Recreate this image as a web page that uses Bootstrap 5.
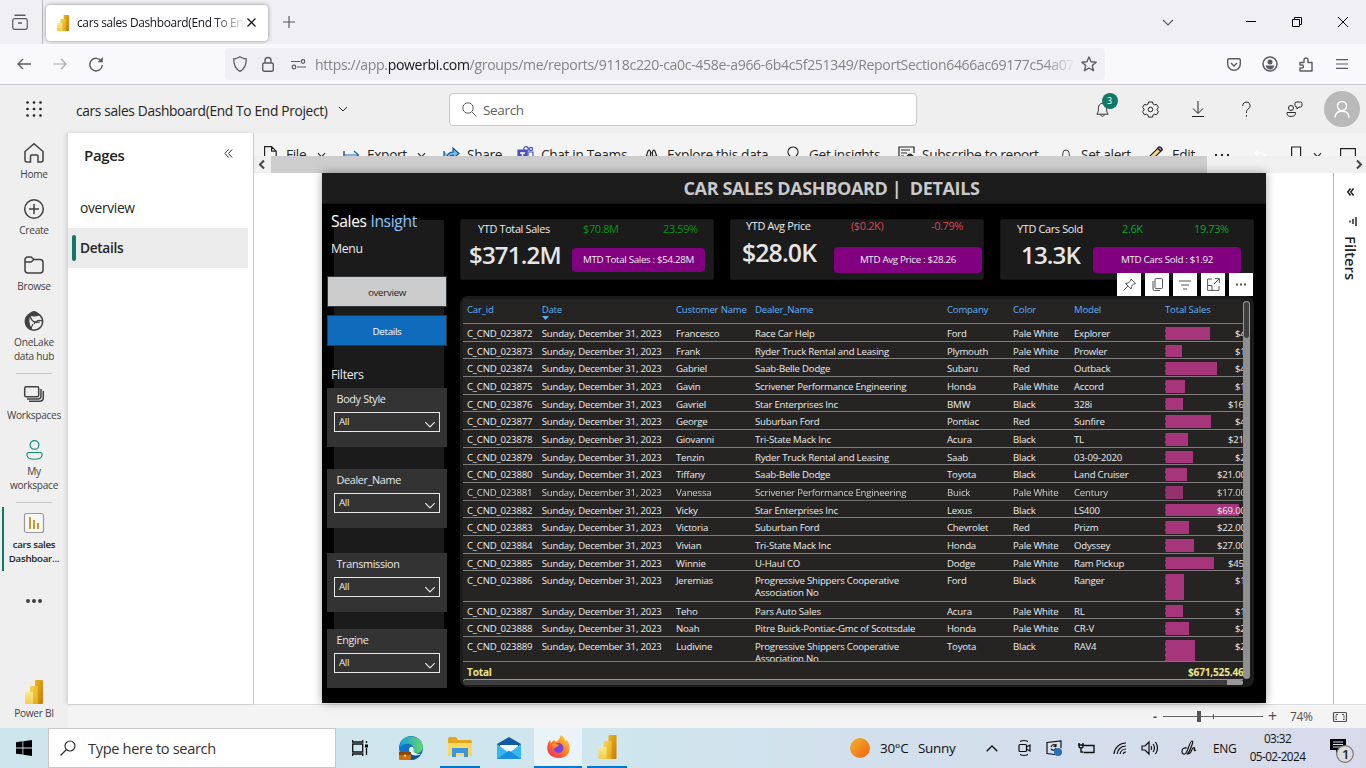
<!DOCTYPE html>
<html lang="en">
<head>
<meta charset="utf-8">
<title>cars sales Dashboard(End To End Project)</title>
<link href="https://cdn.jsdelivr.net/npm/bootstrap@5.3.0/dist/css/bootstrap.min.css" rel="stylesheet">
<style>
body{width:1366px;height:768px;overflow:hidden;font-family:"Open Sans","Noto Sans",sans-serif;font-size:13.5px;letter-spacing:-.025em;color:#252423;line-height:1.3;background:#fff}
svg{display:block;fill:none;stroke:currentColor;stroke-width:1.2;overflow:visible;flex:none}
.tracks{display:grid;align-items:center;white-space:nowrap}
.ctr{justify-self:center}
.thin svg{stroke-width:1}
/* browser */
.tabstrip{height:44px;background:#f0eff4;color:#5b5b66;grid-template-columns:42px 1px 3px 222px 42px 839px 38px 41px 46px 46px 46px}
.tabstrip>.vline{background:#b9b9bf;height:44px}
.apptab{height:36px;background:#fff;border-radius:4px;box-shadow:0 0 4px rgba(0,0,0,.4);margin-top:1px;color:#15141a;grid-template-columns:10px 21px 170px 20px;font-size:11.9px}
.fadeout{overflow:hidden;-webkit-mask-image:linear-gradient(90deg,#000 80%,transparent)}
.fadeurl{-webkit-mask-image:linear-gradient(90deg,#000 96%,transparent);padding-top:2px}
.toolbar{height:41px;background:#f9f9fb;border-bottom:1px solid #ccccd0;color:#5b5b66;grid-template-columns:6px 36px 36px 36px 111px 880px 111px 36px 36px 36px 36px}
.urlbar{height:32px;background:#f0f0f4;border-radius:4px;grid-template-columns:30px 26px 34px 760px 30px;font-size:14.07px;color:#83838a}
.urlbar b{font-weight:400;color:#15141a}
/* service header */
.svc{height:48px;background:#efefef;grid-template-columns:76px 262px 111px 468px 161px 48px 48px 48px 48px 48px 48px;font-size:13.75px}
.svc>span,.searchbox>span{padding-top:3px}
.searchbox{height:33px;background:#fff;border:1px solid #c8c8c8;border-radius:4px;color:#616161;grid-template-columns:12px 21px auto;font-size:13.5px}
.bubble{left:7px;top:-8px;width:16px;height:16px;background:#117865;color:#fff;font-size:9px;line-height:16px}
.avatar{width:36px;height:36px;background:#b9b9b9;color:#fff;padding:9px}
/* side nav */
.rail{width:68px;height:595px;background:#efefef;color:#424242;font-size:10.1px;line-height:14px;letter-spacing:-.025em;text-align:center}
.rail .ico{height:24px;margin-bottom:2px;display:flex;align-items:center;justify-content:center}
.railitem{height:56px}
.railline{width:36px;height:1px;background:#c7c7c7;margin:0 auto}
.sel{border-left:2px solid #117865;margin-left:2px;width:66px;height:64px;padding:4px 4px 0 0;font-weight:600;color:#242424;font-size:9.7px}
.sel .ico{margin-bottom:3px}
.pages{width:186px;height:571px;background:#fff;border-right:1px solid #c8c8c8;box-shadow:-2px 0 4px rgba(0,0,0,.13);z-index:1}
.pageon{height:40px;width:180px;background:#ebebeb;font-weight:600;font-size:13.7px}
.pageon i{width:4px;height:26px;border-radius:2px;background:#117865;margin:0 4px}
/* ribbon */
.ribbonclip{height:23px;background:#f4f4f4;overflow:hidden}
.ribbon{height:43px;font-size:13.7px;grid-template-columns:10px 22px 31px 26px 24px 50px 26px 24px 50px 24px 104px 22px 120px 22px 89px 24px 138px 21px 69px 22px 42px 40px 37px 22px 27px 20px}
.hscroll{height:17px;background:#f0f0f0;color:#444}
.hscroll .thumb{width:936px;height:17px;background:#cdcdcd}
.filterpane{width:33px;border-left:1px solid #b5b5b5;background:#fff}
.vert{writing-mode:vertical-rl;font-weight:600;font-size:14.8px;line-height:16px;letter-spacing:0}
/* report */
.canvas{width:944px;height:530px;background:#000;color:#ececec;margin-left:68px;box-shadow:0 0 9px rgba(0,0,0,.35)}
.titlebar{height:31px;background:#1c1c1c;border-bottom:1px solid #141414;color:#c9c9c9;font-weight:700;font-size:18px;letter-spacing:-.021em;text-align:center;padding:4px 0 0 75px;white-space:pre}
.side{width:120px;margin-left:5px;background:linear-gradient(#1b1b1b,#1b1b1b) 7px 16px/110px 100% no-repeat;height:484px}
.navbtn{height:31px;border:1px solid #33383d;font-size:9.8px;width:120px;padding-top:3px}
.slicer{height:59px;background:#333;font-size:10.8px;padding:4px 7px 0;letter-spacing:-.03em}
.slicer>span{display:block;height:14px;padding-left:2.500px;line-height:13px}
.dropbox{height:20px;border:1px solid #e8e8e8;margin-top:6px;padding:1px 3px 0 4px;font-size:9.8px}
.dropbox svg{margin-top:3px}
.kpi{width:254px;height:61px;background:#1b1b1b;border:1px solid #141414;border-radius:2px;line-height:14px;font-size:10.9px}
.kpi .big{font-size:24.1px;font-weight:600;letter-spacing:-.035em;line-height:30px;align-self:start;margin-top:-.5px;color:#e6e6e6}
.k2 .big{margin-top:-1.500px!important;font-size:24.8px!important}
.pill{background:#800080;border-radius:4px;text-align:center;font-size:9.8px}
.k1 .r1{grid-template-columns:17px 105px 80px 40px;margin-top:2px}.k1 .r2{grid-template-columns:8px 103px 133px}
.k2 .r1{grid-template-columns:15px 105px 80px 40px;margin-top:-1px}.k2 .r2{grid-template-columns:11px 92px 148px}
.k3 .r1{grid-template-columns:16px 105px 72px 40px;margin-top:2px}.k3 .r2{grid-template-columns:20px 72px 148px}
.up{color:#0a9414}.up3{color:#06a82a}.down{color:#d64550}
.visual{width:794px;height:391px;background:#1b1b1b;border-radius:8px;padding:3px}
.gridbody{width:780px;height:380px;background:#252423;overflow:hidden;font-size:9.6px;letter-spacing:-.02em}
.gr{display:grid;grid-template-columns:4px 74.700px 134.300px 79px 192px 66px 61px 91px 78px;line-height:12px;white-space:nowrap}
.gr.body{height:17.67px;border-bottom:1px solid #7e7e7e}
.gr.body.tall{height:30.33px}
.gr.body>div{padding-top:4px}
.gr.body>div.meter{padding-top:3px}
.gr.hd{height:25px;border-bottom:1px solid #2a8af5;color:#62aef7;padding-top:5px}
.gr.tot{height:19px;border-top:1px solid #2a8af5;color:#f0e58c;font-weight:700;padding-top:4px;background:#252423;font-size:10.1px}
.bar{height:calc(100% - 1px);background:#a7357c;border-left:1px dashed #6c2550}
.amt{padding-top:4px}
.v4{padding-left:70px}.v6{padding-left:63px}.v8{padding-left:52px}
.rows{height:337px;overflow:hidden}
.dim{opacity:.85}
.vsb{width:7px;height:378px;background:#8f8f8f;border-radius:4px;margin-top:2px}
.vsb i{display:block;width:7px;height:38px;background:#3f3f3f;border:1px solid #999;border-radius:4px}
.hsb{width:780px;height:6px;background:#3c3c3c;border-top:1px solid #999;border-radius:4px 0 0 4px}
.hsb i{display:block;width:16px;height:5px;background:#999;margin-left:auto;border-radius:0 4px 4px 0}
.hover{right:1px;top:-23px;gap:4px}
.hover span{width:24px;height:23px;background:#fff;color:#555;display:grid;place-items:center}
/* status and taskbar */
.status{height:24px;background:#f4f4f4;border-top:1px solid #dcdcdc;color:#505050;grid-template-columns:1085px 10px 100px 19px 51px 14px;font-size:12px}
.zoomline{height:1px;background:#666}
.zoomline i{left:34px;top:-5px;width:4px;height:11px;background:#555}
.zoomline b{left:50px;top:-2px;width:1px;height:5px;background:#555}
.taskbar{height:40px;background:linear-gradient(90deg,#cde5ec,#cfe6ee 45%,#d2dfec 65%,#d8daea);color:#111;grid-template-columns:48px 288px 48px 53px 46px 51px 48px 53px 245px 32px 38px 49px 36px 31px 33px 32px 31px 35px 32px 27px 76px 43px}
.taskbar>span,.find>span{padding-top:1px}
.taskbar .find{height:40px;background:#fff;border:1px solid #c4c8ca;grid-template-columns:11px 28px auto;font-size:14.6px;color:#333}
.under{height:40px;border-bottom:2px solid #0077d4}
.s12{font-size:12px}
.clock{line-height:18px;font-size:11.800px;letter-spacing:-.05em;margin:-2px 0 0 -33px}
</style>
</head>
<body>
<svg width="0" height="0" class="position-absolute">
<defs>
<linearGradient id="ga" x2="1" y2="1"><stop stop-color="#edb51b"/><stop offset="1" stop-color="#c37a0c"/></linearGradient>
<linearGradient id="gb" x2="1" y2="1"><stop stop-color="#f7d74f"/><stop offset="1" stop-color="#e3a813"/></linearGradient>
<linearGradient id="gc" x2="0" y2="1"><stop stop-color="#fbe98c"/><stop offset="1" stop-color="#f1ce4d"/></linearGradient>
<linearGradient id="sun" x2="1" y2="1"><stop stop-color="#f1b62c"/><stop offset="1" stop-color="#ee6110"/></linearGradient>
<linearGradient id="edg" x2="1"><stop stop-color="#1b9de2"/><stop offset="1" stop-color="#62d968"/></linearGradient>
<linearGradient id="ff" x1="1" x2="0" y2="1"><stop stop-color="#ffe23a"/><stop offset=".5" stop-color="#ff7a2a"/><stop offset="1" stop-color="#ee2263"/></linearGradient>
<symbol id="pbi" viewBox="0 0 18 24"><g stroke="none"><rect x="10" width="8" height="24" rx="1" fill="url(#ga)"/><path d="M5 7q0-1 1-1h6q1 0 1 1v17H5z" fill="url(#gb)"/><path d="M0 13q0-1 1-1h6q1 0 1 1v11H1q-1 0-1-1z" fill="url(#gc)"/></g></symbol>
<symbol id="chev" viewBox="0 0 10 6"><path d="M1 1l4 4 4-4"/></symbol>
<symbol id="bell" viewBox="0 0 16 18"><path d="M2 14h12c-1.500-2-1.700-4-1.700-7A4.300 4.600 0 0 0 3.700 7c0 3-.2 5-1.700 7zM6 14.500c.3 2.200 3.700 2.200 4 0"/></symbol>
<symbol id="dbl" viewBox="0 0 10 10"><path d="M5 .5L1 5l4 4.500M9 .5L5 5l4 4.500"/></symbol>
</defs></svg>

<div class="d-flex flex-column vh-100">
<header class="tracks tabstrip">
  <svg class="ctr" style="translate:-1px" width="16" height="16"><rect x=".7" y="4.700" width="14.600" height="10.600" rx="2"/><path d="M2.500 1.200h11M6 9h4" stroke-width="1.500"/></svg>
  <span class="vline"></span><span></span>
  <div class="tracks apptab"><span></span><svg width="14" height="16"><use href="#pbi"/></svg><span class="fadeout">cars sales Dashboard(End To End</span><svg width="9" height="9"><path d="M.5.5l8 8M8.500.5l-8 8"/></svg></div>
  <svg class="ctr" width="12" height="12"><path d="M6 0v12M0 6h12"/></svg><span></span>
  <svg class="ctr" width="12" height="7"><path d="M1 1l5 5 5-5"/></svg><span></span>
  <svg class="ctr text-black" width="10" height="2"><path d="M0 .5h10" stroke-width="1"/></svg>
  <svg class="ctr text-black" width="10" height="10"><path d="M.5 2.500h7v7h-7zM2.500 2.500v-2h7v7h-2" stroke-width="1"/></svg>
  <svg class="ctr text-black" width="10" height="10"><path d="M0 0l10 10M10 0L0 10" stroke-width="1"/></svg>
</header>

<div class="tracks toolbar"><span></span>
  <svg class="ctr" width="14" height="12"><path d="M14 6H1M6 1L1 6l5 5" stroke-width="1.400"/></svg>
  <svg class="ctr opacity-50" width="14" height="12"><path d="M0 6h13M8 1l5 5-5 5"/></svg>
  <svg class="ctr" width="14" height="14"><path d="M12.500 4.500A6.300 6.300 0 1 0 13.300 8" stroke-width="1.400"/><path d="M13.800 0v5.300H8.500z" fill="#5b5b66" stroke="none"/></svg><span></span>
  <div class="tracks urlbar">
    <svg class="ctr" width="14" height="16"><path d="M7 .7c2 1.400 4 2 6.300 2.300C13.300 9 12 13 7 15.300 2 13 .7 9 .7 3 3 2.700 5 2.100 7 .7z" stroke="#5b5b66" stroke-width="1.300"/></svg>
    <svg class="ctr" width="12" height="16"><rect x=".7" y="7" width="10.600" height="8.300" rx="1.500" stroke="#5b5b66" stroke-width="1.400"/><path d="M3 7V4.500a3 3 0 0 1 6 0V7" stroke="#5b5b66" stroke-width="1.400"/></svg>
    <svg class="ctr" width="15" height="10"><g stroke="#5b5b66"><path d="M0 2.500h9M6 8h9"/><circle cx="12" cy="2.500" r="1.800"/><circle cx="3" cy="8" r="1.800"/></g></svg>
    <span class="fadeout fadeurl">https://app.<b>powerbi.com</b>/groups/me/reports/9118c220-ca0c-458e-a966-6b4c5f251349/ReportSection6466ac69177c54a07</span>
    <svg class="ctr" style="translate:-1px" width="16" height="16"><path d="M8 1l2.100 4.700 5 .5-3.800 3.400 1.200 5L8 12l-4.500 2.600 1.200-5L.9 6.200l5-.5z" stroke="#5b5b66" stroke-width="1.400" stroke-linejoin="round"/></svg>
  </div><span></span>
  <svg class="ctr" width="14" height="13"><path d="M2 .7h10q1.300 0 1.300 1.300v4a6.300 6.300 0 0 1-12.600 0V2Q.7.700 2 .7zM4 5l3 3 3-3" stroke-width="1.400"/></svg>
  <svg class="ctr" width="16" height="16"><circle cx="8" cy="8" r="7" stroke-width="1.500"/><circle cx="8" cy="6" r="2.500" fill="#5b5b66" stroke="none"/><path d="M3.500 9.500h9q-1.500 4-4.500 4t-4.500-4z" fill="#5b5b66" stroke="none"/></svg>
  <svg class="ctr" width="14" height="15"><path d="M1 5.500h4V3a2 2 0 0 1 4 0v2.500h4V14H1v-3h2a1.500 1.500 0 0 0 0-3H1z" stroke-width="1.400" stroke-linejoin="round"/></svg>
  <svg class="ctr" width="12" height="10"><path d="M0 .7h12M0 5h12M0 9.300h12"/></svg>
</div>

<div class="tracks svc thin">
  <svg class="ms-auto me-auto" width="16" height="16" style="translate:-4px"><path d="M1.500 1.500h.01M8 1.500h.01M14.500 1.500h.01M1.500 8h.01M8 8h.01M14.500 8h.01M1.500 14.500h.01M8 14.500h.01M14.500 14.500h.01" stroke-width="2.700" stroke-linecap="round"/></svg>
  <span>cars sales Dashboard(End To End Project)</span><svg width="10" height="6"><use href="#chev"/></svg>
  <div class="tracks searchbox"><span></span><svg width="15" height="15"><circle cx="6" cy="6" r="5.200"/><path d="M10 10l4.500 4.500"/></svg><span>Search</span></div><span></span>
  <div class="ctr position-relative"><svg width="15" height="17"><use href="#bell"/></svg><span class="bubble position-absolute rounded-circle text-center">3</span></div>
  <svg class="ctr" width="17" height="17"><circle cx="8.500" cy="8.500" r="2.300"/><path d="M6.500 1h4l.5 2 1.500.9 2-.6 2 3.200-1.500 1.400v1.300l1.500 1.400-2 3.200-2-.6-1.500.9-.5 2h-4l-.5-2-1.500-.9-2 .6-2-3.200L2 9.200V7.900L.5 6.500l2-3.200 2 .6L6 3z" stroke-linejoin="round"/></svg>
  <svg class="ctr" width="12" height="16"><path d="M6 0v12M1 7.500L6 12.500l5-5M0 15.500h12"/></svg>
  <svg class="ctr" width="9" height="15"><path d="M.7 4a3.700 3.700 0 1 1 5.800 2.800C5 8 4.400 8.600 4.400 11M4.400 13v1.700"/></svg>
  <svg class="ctr" width="17" height="17"><circle cx="5" cy="7" r="2.500"/><path d="M1 11.500h8.500v1c0 4-8.500 4-8.500 0zM9 2.500q0-1.500 1.500-1.500h4Q16 1 16 2.500v2Q16 6 14.500 6H13l-2 2V6q-2 0-2-1.500z"/></svg>
  <div class="ctr avatar rounded-circle"><svg width="18" height="18"><circle cx="9" cy="6" r="4.500" stroke-width="1.600"/><path d="M2 17.500C2 9 16 9 16 17.500" stroke-width="1.600"/></svg></div>
</div>

<div class="d-flex" style="height:595px">
  <nav class="rail flex-shrink-0 d-flex flex-column pt-2">
    <div class="railitem"><div class="ico"><svg width="20" height="20"><path d="M1 8.500L10 .8l9 7.700V17q0 2-2 2h-3v-6q0-1-1-1H7.500q-1 0-1 1v6H3q-2 0-2-2z" stroke-width="1.500"/></svg></div>Home</div>
    <div class="railitem"><div class="ico"><svg width="20" height="20"><circle cx="10" cy="10" r="9.300" stroke-width="1.500"/><path d="M10 5v10M5 10h10" stroke-width="1.500"/></svg></div>Create</div>
    <div class="railitem"><div class="ico"><svg width="20" height="18"><path d="M1 4q0-3 3-3h3l3 2.500h6q3 0 3 3V14q0 3-3 3H4q-3 0-3-3zM1 6h6l3-2.500" stroke-width="1.500"/></svg></div>Browse</div>
    <div class="railitem mb-2"><div class="ico"><svg width="20" height="20"><circle cx="10" cy="10.500" r="8.700" stroke-width="1.500"/><path d="M5 4Q10-3 15 4 10 6 5 4zM1.500 9Q2 5 6 4q-3 6 1 14Q1 15 1.500 9z" fill="#424242"/><path d="M6 5q2 8 10 6M9 13q-2 3-2 6M10 13q3-5 9-3"/></svg></div>OneLake<br>data hub</div>
    <div class="railline mb-2"></div>
    <div class="railitem"><div class="ico"><svg width="20" height="16"><rect x=".7" y=".7" width="14" height="10" rx="1.500" stroke-width="1.500"/><path d="M17 3v7q0 3-3 3H3M19.300 5v6.500q0 3.800-4 3.800H5" stroke-width="1.500"/></svg></div>Workspaces</div>
    <div class="railitem mb-2"><div class="ico" style="color:#148a78"><svg width="17" height="20"><circle cx="8.500" cy="5" r="4.400"/><path d="M3 12.500h11q2.500 0 2 3c-1 5-14 5-15 0q-.5-3 2-3z"/></svg></div>My<br>workspace</div>
    <div class="railline"></div>
    <div class="sel mt-1"><div class="ico"><svg width="20" height="20"><rect x=".5" y=".5" width="19" height="19" rx="2" fill="#f8f8f8" stroke="#999"/><path d="M6 4v12M10 7v9M14 10v6" stroke="#c98a1b" stroke-width="1.800"/></svg></div>cars sales<br>Dashboar...</div>
    <svg class="mx-auto mt-4" width="16" height="12"><path d="M2 6h.01M8 6h.01M14 6h.01" stroke-width="4" stroke-linecap="round"/></svg>
    <div class="mt-auto mb-1 pb-1"><div class="ico"><svg width="18" height="24"><use href="#pbi"/></svg></div>Power BI</div>
  </nav>
  <div>
  <div class="d-flex">
  <aside class="pages flex-shrink-0 thin">
    <div class="d-flex justify-content-between ps-3" style="height:66px;padding:13px 20px 0"><span class="fw-semibold" style="font-size:15px">Pages</span><svg style="margin-top:2px" width="9" height="11"><use href="#dbl"/></svg></div>
    <div style="padding-left:12px;height:29px;font-size:13.8px">overview</div>
    <div class="pageon d-flex align-items-center"><i></i>Details</div>
  </aside>
  <main style="width:1112px">
    <div class="ribbonclip"><div class="tracks ribbon"><span></span>
      <svg width="13" height="17"><path d="M.6.6h7l4.600 4.600v11H.6zM7.600.6v4.600h4.600"/></svg><span>File</span><svg width="9" height="6"><use href="#chev"/></svg>
      <svg width="16" height="10"><path d="M1 1v9"/><path d="M1 5h14M11 1l4.500 4-4.500 4" stroke="#0f6cbd"/></svg><span>Export</span><svg width="9" height="6"><use href="#chev"/></svg>
      <svg width="17" height="16"><path d="M1 4v11h11M4 12q0-7 6-7V1l6 5.500-6 5V8q-3 0-6 4z" fill="#7bb8ea" stroke="#0b5394"/></svg><span>Share</span>
      <svg width="17" height="17"><g stroke="#4b53bc"><circle cx="9" cy="3" r="2.300"/><circle cx="14" cy="3" r="1.600"/><path d="M11 6h5v9h-5z"/><path d="M1 4h9v10H1z" fill="#4b53bc"/></g><path d="M3 7h5M5.500 7v6" stroke="#fff" stroke-width="1.500"/></svg><span>Chat in Teams</span>
      <svg width="13" height="12"><path d="M1 8l2-6q2-2 2.500 1v6M12 8l-2-6Q8 0 7.500 3v6M5.500 4h2"/><circle cx="3" cy="9" r="2"/><circle cx="10" cy="9" r="2"/></svg><span>Explore this data</span>
      <svg width="12" height="18"><path d="M4 13Q4 11 2 9a5 5 0 1 1 8 0Q8 11 8 13zM4.500 16h3"/></svg><span>Get insights</span>
      <svg width="17" height="17"><path d="M6 14H1V1h15v6M3 4h9M3 7h6M3 10h3"/><path d="M7 15q2-2 2-5 3-4 6 0 0 3 2 5z" fill="#333"/></svg><span>Subscribe to report</span>
      <svg width="12" height="16"><use href="#bell"/></svg><span>Set alert</span>
      <svg width="16" height="16" style="translate:-3px -1px"><path d="M1 15l1-4L12 1q3 0 3 3L5 14z" fill="#f7d77f"/><path d="M12 1q3 0 3 3l-1.500 1.200-3-3z" fill="#b37ac4"/></svg><span>Edit</span>
      <svg width="16" height="4"><path d="M1 2h2M7 2h2M13 2h2" stroke-width="2"/></svg>
      <svg width="13" height="12" style="color:#fff"><path d="M4 1L1 4l3 3M1 4h7q4 1 3 6"/></svg>
      <svg width="11" height="18"><path d="M.6 1h9v16L5 13 .6 17z"/></svg><svg width="9" height="6"><use href="#chev"/></svg>
      <svg width="16" height="14"><path d="M.6.6h14.800v12H.6z"/></svg>
    </div></div>
    <div class="hscroll d-flex align-items-center justify-content-between"><svg width="17" height="9"><path d="M10 .5l-4 4 4 4" stroke-width="2"/></svg><div class="thumb"></div><svg class="ms-auto me-1" width="6" height="9"><path d="M1 .5l4 4-4 4" stroke-width="2"/></svg></div>
    <div class="d-flex" style="height:531px">
      <div class="flex-grow-1">
      <section class="canvas">
        <div class="titlebar">CAR SALES DASHBOARD |  DETAILS</div>
        <div class="d-flex">
          <div class="side flex-shrink-0 thin">
            <div style="padding:7px 0 0 4px;font-size:15.6px;height:37px;color:#fff">Sales <span style="color:#8cc4ff">Insight</span></div>
            <div class="ps-1" style="font-size:12.3px;height:35px">Menu</div>
            <div class="navbtn d-flex align-items-center justify-content-center" style="background:#ccc;color:#252423">overview</div>
            <div class="navbtn d-flex align-items-center justify-content-center mt-2 text-white" style="background:#0f6cbd">Details</div>
            <div class="ps-1" style="font-size:12.4px;height:42px;padding-top:21px">Filters</div>
            <div class="slicer"><span>Body Style</span><div class="dropbox d-flex align-items-center justify-content-between">All<svg width="12" height="7"><use href="#chev"/></svg></div></div>
            <div class="slicer" style="margin-top:22px"><span>Dealer_Name</span><div class="dropbox d-flex align-items-center justify-content-between">All<svg width="12" height="7"><use href="#chev"/></svg></div></div>
            <div class="slicer" style="margin-top:25px"><span>Transmission</span><div class="dropbox d-flex align-items-center justify-content-between">All<svg width="12" height="7"><use href="#chev"/></svg></div></div>
            <div class="slicer" style="margin-top:17px"><span>Engine</span><div class="dropbox d-flex align-items-center justify-content-between">All<svg width="12" height="7"><use href="#chev"/></svg></div></div>
          </div>
          <div style="margin-left:13px;padding-top:15px">
            <div class="d-flex" style="gap:16px;height:77px">
              <div class="kpi k1"><div class="tracks r1"><span></span><span>YTD Total Sales</span><span class="up">$70.8M</span><span class="up">23.59%</span></div>
                <div class="tracks r2" style="margin-top:4px"><span></span><span class="big">$371.2M</span><span class="pill" style="line-height:24px;margin-top:8px">MTD Total Sales : $54.28M</span></div></div>
              <div class="kpi k2"><div class="tracks r1"><span></span><span>YTD Avg Price</span><span class="down">($0.2K)</span><span class="down">-0.79%</span></div>
                <div class="tracks r2" style="margin-top:5px"><span></span><span class="big">$28.0K</span><span class="pill" style="line-height:26px;margin-top:9px">MTD Avg Price : $28.26</span></div></div>
              <div class="kpi k3"><div class="tracks r1"><span></span><span>YTD Cars Sold</span><span class="up3">2.6K</span><span class="up3">19.73%</span></div>
                <div class="tracks r2" style="margin-top:4px"><span></span><span class="big">13.3K</span><span class="pill" style="line-height:26px;margin-top:7px">MTD Cars Sold : $1.92</span></div></div>
            </div>
            <div class="visual position-relative">
              <div class="d-flex">
                <div class="gridbody">
                  <div class="gr hd"><span></span><div>Car_id</div><div class="position-relative">Date<svg class="position-absolute" style="left:0;top:12px" width="7" height="4"><path d="M0 0h7L3.500 4z" fill="#62aef7" stroke="none"/></svg></div><div>Customer Name</div><div>Dealer_Name</div><div>Company</div><div>Color</div><div>Model</div><div>Total Sales</div></div>
                  <div class="rows" id="rows"></div>
                  <div class="gr tot"><span></span><div>Total</div><i></i><i></i><i></i><i></i><i></i><i></i><div style="padding-left:23px">$671,525.46</div></div>
                </div>
                <div class="vsb"><i></i></div>
              </div>
              <div class="hsb"><i></i></div>
              <div class="hover thin position-absolute d-flex">
                <span><svg width="13" height="13"><path d="M8 1l4.500 4.500-2 .5-2 2.500-.5 2.500L2.500 5.500 5 5l2.500-2zM5 8l-4.500 4.500"/></svg></span>
                <span><svg width="11" height="13"><rect x="3" y=".6" width="7.500" height="10" rx="1"/><path d="M1 3v8q0 1.500 1.500 1.500H8"/></svg></span>
                <span><svg width="12" height="10"><path d="M0 1h12M2 5h8M4 9h4"/></svg></span>
                <span><svg width="13" height="13"><path d="M5 1H.6v11.400H12V8M8 .6h4.400V5M12.400.6L7 6M.6 7.500H5v5"/></svg></span>
                <span><svg width="12" height="3"><path d="M1 1.500h2M5 1.500h2M9 1.500h2" stroke-width="2"/></svg></span>
              </div>
            </div>
          </div>
        </div>
      </section>
      </div>
      <div class="filterpane">
        <svg class="mx-auto" style="margin-top:15px" width="7" height="8"><g stroke-width="1.600"><path d="M3.500.5L.8 4l2.700 3.500M6.500.5L3.800 4l2.700 3.500"/></g></svg>
        <svg style="margin:21px 0 0 15px" width="8" height="9"><path d="M7 0v9M4 2v5M1 3.500v2" stroke-width="1.500"/></svg>
        <div class="vert" style="margin:10px 0 0 9px">Filters</div>
      </div>
    </div>
  </main>
  </div>
  <div class="tracks status"><span></span><span class="fw-bold">-</span><div class="zoomline position-relative"><i class="position-absolute"></i><b class="position-absolute"></b></div><span class="fs-6" style="padding-left:5px">+</span><span class="ps-2">74%</span><svg width="14" height="10"><rect x=".5" y=".5" width="13" height="9" rx="1"/><path d="M5 2.500H3v5h2M9 2.500h2v5H9" stroke-dasharray="2 1"/></svg></div>
  </div>
</div>

<footer class="tracks taskbar">
  <svg class="ctr" width="16" height="16"><path d="M0 2.200l6.500-.9v6.200H0zM7.300 1.200L16 0v7.500H7.300zM0 8.400h6.500v6.200L0 13.700zM7.300 8.400H16V16l-8.700-1.200z" fill="#000" stroke="none"/></svg>
  <div class="tracks find"><span></span><svg width="16" height="16"><circle cx="10" cy="6" r="5"/><path d="M6.500 9.500L.5 15.500"/></svg><span>Type here to search</span></div>
  <svg class="ctr" width="16" height="16"><path d="M.7 4h10v8h-10zM.7 0v2h10V0M.7 16v-2h10v2M14.500 1v2M14.500 8v7" stroke-width="1.300"/><path d="M13 4.500h3v3h-3z" fill="#000" stroke="none"/></svg>
  <svg class="ctr" width="24" height="24"><g stroke="none"><circle cx="12" cy="12" r="12" fill="#1272c8"/><path d="M1 11C1-1 15-2 21 4c5 5 3 13-3 13-5 0-4-2-3-3 1-4-4-7-8-6-4 0-6 3-6 3z" fill="url(#edg)"/><path d="M22 18c-4 3-12 2-12-4 0-3 2-4 4-3 2 2-1 4 2 6 2 1 4 1 6 1z" fill="#e2f4fa"/><path d="M10 14c0 6 8 7 12 4-3 5-8 6-12 6z" fill="#0b5499"/><rect y="16" width="12" height="8" rx="1" fill="#c96e10"/><path d="M0 16h12v3H0z" fill="#8a4507"/><path d="M5 18.500h2v2H5z" fill="#ffd44a"/></g></svg>
  <div class="under ctr d-flex align-items-center" style="width:40px;padding-left:8px"><svg width="24" height="20"><g stroke="none"><path d="M0 2q0-2 2-2h6l2 3h12q2 0 2 2v12q0 2-2 2H2q-2 0-2-2z" fill="#e6a61d"/><path d="M0 6h24v11q0 2-2 2H2q-2 0-2-2z" fill="#ffd761"/><path d="M4 20v-9h16v9h-4v-4H8v4z" fill="#3a96dd"/></g></svg></div>
  <svg class="ctr" width="24" height="22"><g stroke="none"><path d="M0 7L12 0l12 7v15H0z" fill="#0f5aa5"/><path d="M3 8h18v10H3z" fill="#f3f8fb"/><path d="M0 7l12 9L24 7v15H0z" fill="#35b8f1"/><path d="M0 22l12-8.500L24 22z" fill="#1b8fdd"/></g></svg>
  <div class="under d-flex align-items-center justify-content-center" style="background:#eaf4f8"><svg width="23" height="24"><g stroke="none"><path d="M3 5l1 3 3-3 2 2C11 6 13 3 14 0c3 2 4 4 4 6l2-1c5 8 3 18-8 18S-3 13 3 5z" fill="url(#ff)"/><circle cx="11.500" cy="13" r="5" fill="#7a42dc"/><path d="M5 9c3-2 5 0 7 1-1 2-4 1-4 4-2-1-3-3-3-5z" fill="#ff8b1d"/></g></svg></div>
  <div class="under d-flex align-items-center justify-content-center" style="width:40px;margin-left:5px"><svg width="19" height="24"><use href="#pbi"/></svg></div>
  <svg class="ms-auto" style="margin-right:10px" width="20" height="20"><circle cx="10" cy="10" r="10" fill="url(#sun)" stroke="none"/></svg>
  <span>30°C</span><span style="padding-left:6px">Sunny</span>
  <svg class="ms-auto me-2" style="translate:7px" width="12" height="7"><path d="M.7 6.300L6 1l5.300 5.300" stroke-width="1.400"/></svg>
  <svg class="ms-auto me-1" width="13" height="16"><rect x="1" y="4.500" width="7.500" height="7" rx="1"/><path d="M8.500 7l3.500-2v6L8.500 9M2 1.500q4-2 8 0M2 14.500q4 2 8 0"/></svg>
  <svg class="ms-auto me-1" width="16" height="16"><path d="M15 8V1L1 2.500v11l8 1"/><path d="M5 7q2-4 5-1M10 4v2.500H7.500M10 8q-2 4-5 1"/><circle cx="12" cy="12" r="4" fill="#2870b8" stroke="none"/></svg>
  <svg class="ms-auto me-1" width="17" height="12"><path d="M6 3.500h10v7H5.500M1 1v3q0 2 2 2t2-2V1M0 3h6M3 6v4h2" stroke-width="1.400"/></svg>
  <svg class="ms-auto me-1" width="14" height="14"><path d="M1 13A12 12 0 0 1 13 2M4 13a9 9 0 0 1 9-8M7 13a6 6 0 0 1 6-5M10 13a3 3 0 0 1 3-2"/></svg>
  <svg class="ms-auto me-1" width="17" height="14"><path d="M1 5h3l4-4v12L4 9H1zM10 5q1.500 2 0 4M12 3q3 4 0 8M14.500 1q4 6 0 12"/></svg>
  <svg class="ms-auto" width="16" height="16"><path d="M6 8C2 7.500 1 9 1 11.500s2.500 3.500 4 1.500c2-2.500 4-12 6-12 1.500 0 .5 3-1 6.500-1 3-3 6-4 7M7 13c1 2 3-1 3.500-2.500C12 7 14 7 13.500 9c-.5 2 0 2 1.500 1"/></svg>
  <span class="ps-3 s12">ENG</span><span></span>
  <div class="text-center clock">03:32<br>05-02-2024</div>
  <svg width="24" height="26" style="margin-top:5px;translate:-2px"><path d="M0 1h16v11H9l-3 3v-3H0z" fill="#000" stroke="none"/><path d="M3 4h10M3 6.500h10M3 9h8" stroke="#d8daea"/><circle cx="15" cy="16" r="8.300" fill="#dcdcdc" stroke="#777"/><text x="12" y="21" font-size="13" font-weight="600" fill="#222" stroke="none">1</text></svg>
</footer>
</div>
<script>
// id suffix, customer, dealer, company, color, model, bar width in px, visible amount
const data=[
["72","Francesco","Race Car Help","Ford","Pale White","Explorer",45,"$4"],
["73","Frank","Ryder Truck Rental and Leasing","Plymouth","Pale White","Prowler",17,"$1"],
["74","Gabriel","Saab-Belle Dodge","Subaru","Red","Outback",52,"$4"],
["75","Gavin","Scrivener Performance Engineering","Honda","Pale White","Accord",20,"$1"],
["76","Gavriel","Star Enterprises Inc","BMW","Black","328i",18,"$16"],
["77","George","Suburban Ford","Pontiac","Red","Sunfire",46,"$4"],
["78","Giovanni","Tri-State Mack Inc","Acura","Black","TL",23,"$21"],
["79","Tenzin","Ryder Truck Rental and Leasing","Saab","Black","03-09-2020",28,"$2"],
["80","Tiffany","Saab-Belle Dodge","Toyota","Black","Land Cruiser",22,"$21.00"],
["81","Vanessa","Scrivener Performance Engineering","Buick","Pale White","Century",18,"$17.00"],
["82","Vicky","Star Enterprises Inc","Lexus","Black","LS400",74,"$69.00"],
["83","Victoria","Suburban Ford","Chevrolet","Red","Prizm",24,"$22.00"],
["84","Vivian","Tri-State Mack Inc","Honda","Pale White","Odyssey",29,"$27.00"],
["85","Winnie","U-Haul CO","Dodge","Pale White","Ram Pickup",49,"$45"],
["86","Jeremias","Progressive Shippers Cooperative<br>Association No","Ford","Black","Ranger",19,"$1"],
["87","Teho","Pars Auto Sales","Acura","Pale White","RL",18,"$1"],
["88","Noah","Pitre Buick-Pontiac-Gmc of Scottsdale","Honda","Pale White","CR-V",24,"$2"],
["89","Ludivine","Progressive Shippers Cooperative<br>Association No","Toyota","Black","RAV4",30,"$2"]];
document.getElementById("rows").innerHTML=data.map(r=>{
 const vc=r[7].length>4?"v8":r[7].length>2?"v6":"v4";
 return `<div class="gr body ${r[2].includes("<br>")?"tall":""} ${r[0]=="81"?"dim":""}"><span></span><div>C_CND_0238${r[0]}</div><div>Sunday, December 31, 2023</div>`+
 r.slice(1,6).map(t=>`<div>${t}</div>`).join("")+
 `<div class="meter position-relative"><div class="bar" style="width:${r[6]}px"></div><span class="amt position-absolute top-0 start-0 ${vc}">${r[7]}</span></div></div>`;
}).join("");
</script>
<script src="https://cdn.jsdelivr.net/npm/bootstrap@5.3.0/dist/js/bootstrap.bundle.min.js"></script>
</body>
</html>
